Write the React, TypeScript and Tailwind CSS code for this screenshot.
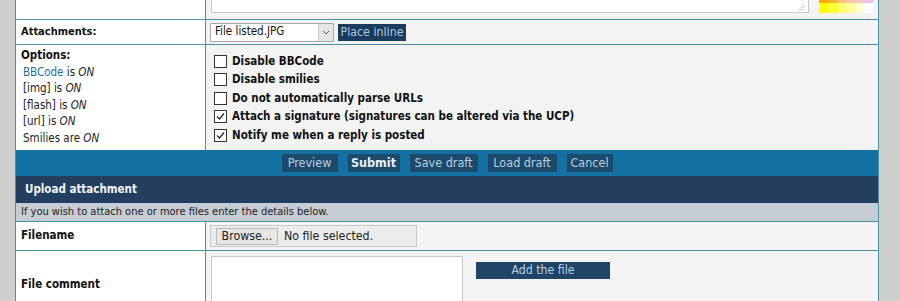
import type { ReactNode } from "react";

const font = "font-['DejaVu_Sans_Condensed','DejaVu_Sans',Verdana,sans-serif]";

function Check({ checked }: { checked?: boolean }) {
  return (
    <span className="flex h-[13px] w-[13px] shrink-0 items-center justify-center border border-[#333] bg-white">
      {checked ? (
        <svg width="9" height="9" viewBox="0 0 9 9" fill="none">
          <path d="M1 4.5 L3.5 7 L8 1.5" stroke="#222" strokeWidth="1.2" />
        </svg>
      ) : null}
    </span>
  );
}

function Option({ checked, children }: { checked?: boolean; children: ReactNode }) {
  return (
    <label className="flex h-[18.5px] items-center gap-[5px] text-[11.5px] font-bold text-[#111]">
      <Check checked={checked} />
      {children}
    </label>
  );
}

function BarButton({ children, bold, w }: { children: ReactNode; bold?: boolean; w: string }) {
  return (
    <button
      className={`h-[18px] bg-[#1d4a6b] text-center text-[12.5px] leading-[18px] ${w} ${
        bold ? "font-bold text-[#e8f0f6]" : "text-[#b8cfe0]"
      }`}
    >
      {children}
    </button>
  );
}

const swatchesTop = ["#ffaa00", "#ffb22e", "#ffc070", "#ffc2b0", "#f8c4c4", "#f0c0f0"];
const swatchesBottom = ["#ffff00", "#ffff33", "#ffff66", "#ffff99", "#ffffcc", "#ffffff"];

export default function App() {
  return (
    <div className={`flex h-[301px] w-[900px] overflow-hidden bg-[#cfcfcf] ${font}`}>
      <div className="w-[15px] shrink-0" />
      <div className="flex w-[864px] shrink-0 flex-col border-x border-[#4d8fa3] bg-[#f3f3f3]">
        {/* message row (cut off) */}
        <div className="grid h-[20px] shrink-0 grid-cols-[190px_1fr] border-b border-[#4d8fa3]">
          <div className="border-r border-[#4d8fa3] bg-white" />
          <div className="flex items-start pl-[5px]">
            <div className="relative h-[13px] w-[598px] border-x border-b border-[#c8c8c8] bg-white">
              <svg className="absolute bottom-[1px] right-[3px]" width="6" height="6" viewBox="0 0 6 6">
                <rect x="4" y="0" width="1" height="1" fill="#aaa" />
                <rect x="2" y="2" width="1" height="1" fill="#aaa" />
                <rect x="4" y="2" width="1" height="1" fill="#aaa" />
                <rect x="0" y="4" width="1" height="1" fill="#aaa" />
                <rect x="2" y="4" width="1" height="1" fill="#aaa" />
                <rect x="4" y="4" width="1" height="1" fill="#aaa" />
              </svg>
            </div>
            <div className="ml-[10px] flex flex-col">
              <div className="flex h-[3px]">
                {swatchesTop.map((c) => (
                  <span key={c} className="h-[3px] w-[9px]" style={{ background: c }} />
                ))}
              </div>
              <div className="flex h-[10px]">
                {swatchesBottom.map((c) => (
                  <span key={c} className="h-[10px] w-[9px]" style={{ background: c }} />
                ))}
              </div>
            </div>
          </div>
        </div>

        {/* attachments */}
        <div className="grid h-[25px] shrink-0 grid-cols-[190px_1fr] border-b border-[#4d8fa3]">
          <div className="flex items-center border-r border-[#4d8fa3] bg-white pl-[5px] text-[11px] font-bold text-[#111]">
            Attachments:
          </div>
          <div className="flex items-center gap-[4px] pl-[4px]">
            <div className="flex h-[19px] w-[124px] items-center border border-[#aaa] bg-white">
              <span className="flex-1 pl-[4px] text-[11.5px] text-[#111]">File listed.JPG</span>
              <span className="flex h-[17px] w-[15px] items-center justify-center border-l border-[#ccc] bg-[#e6e6e6]">
                <svg width="8" height="5" viewBox="0 0 8 5" fill="none">
                  <path d="M1 1 L4 4 L7 1" stroke="#555" strokeWidth="1" />
                </svg>
              </span>
            </div>
            <button className="h-[17px] w-[68px] bg-[#1b3c5c] text-[12.3px] leading-[17px] text-[#a9cbe3]">
              Place inline
            </button>
          </div>
        </div>

        {/* options */}
        <div className="grid h-[105px] shrink-0 grid-cols-[190px_1fr]">
          <div className="flex flex-col border-r border-[#4d8fa3] bg-white pl-[5px] pt-[2px] text-[11.5px] leading-[16.6px] text-[#222]">
            <span className="font-bold text-[#111]">Options:</span>
            <span className="pl-[2px]">
              <span className="text-[#1f6e9c]">BBCode</span> is <i>ON</i>
            </span>
            <span className="pl-[2px]">
              [img] is <i>ON</i>
            </span>
            <span className="pl-[2px]">
              [flash] is <i>ON</i>
            </span>
            <span className="pl-[2px]">
              [url] is <i>ON</i>
            </span>
            <span className="pl-[2px]">
              Smilies are <i>ON</i>
            </span>
          </div>
          <div className="flex flex-col pl-[8px] pt-[7px]">
            <Option>Disable BBCode</Option>
            <Option>Disable smilies</Option>
            <Option>Do not automatically parse URLs</Option>
            <Option checked>Attach a signature (signatures can be altered via the UCP)</Option>
            <Option checked>Notify me when a reply is posted</Option>
          </div>
        </div>

        {/* submit bar */}
        <div className="flex h-[26px] shrink-0 items-center justify-center gap-[10px] bg-[#1372a3]">
          <BarButton w="w-[56px]">Preview</BarButton>
          <BarButton w="w-[52px]" bold>
            Submit
          </BarButton>
          <BarButton w="w-[68px]">Save draft</BarButton>
          <BarButton w="w-[69px]">Load draft</BarButton>
          <BarButton w="w-[46px]">Cancel</BarButton>
        </div>

        {/* upload header */}
        <div className="flex h-[27px] shrink-0 items-center bg-[#223f60] pl-[9px] text-[11.5px] font-bold text-[#f2f6fa]">
          Upload attachment
        </div>
        <div className="flex h-[19px] shrink-0 items-center border-b border-[#4d8fa3] bg-[#c6ccd3] pl-[5px] text-[11px] text-[#222]">
          If you wish to attach one or more files enter the details below.
        </div>

        {/* filename */}
        <div className="grid h-[29px] shrink-0 grid-cols-[190px_1fr] border-b border-[#4d8fa3]">
          <div className="flex items-center border-r border-[#4d8fa3] bg-white pl-[5px] text-[11.5px] font-bold text-[#111]">
            Filename
          </div>
          <div className="flex items-center pl-[4px]">
            <div className="flex h-[22px] w-[207px] items-center gap-[6px] border border-[#c8c8c8] bg-[#ececec] pl-[5px]">
              <button className="h-[17px] w-[62px] border border-[#bbb] bg-[#e6e6e6] text-[12.3px] leading-[15px] text-[#222]">
                Browse...
              </button>
              <span className="text-[12.3px] text-[#222]">No file selected.</span>
            </div>
          </div>
        </div>

        {/* file comment */}
        <div className="grid min-h-0 flex-1 grid-cols-[190px_1fr]">
          <div className="border-r border-[#4d8fa3] bg-white pl-[5px] pt-[25px] text-[11.5px] font-bold text-[#111]">
            File comment
          </div>
          <div className="flex items-start gap-[13px] pl-[5px] pt-[5px]">
            <div className="h-[60px] w-[252px] shrink-0 border border-[#c8c8c8] bg-white" />
            <button className="mt-[6px] h-[17px] w-[134px] bg-[#1f4466] text-[12.2px] leading-[17px] text-[#b6d0e4]">
              Add the file
            </button>
          </div>
        </div>
      </div>
    </div>
  );
}
